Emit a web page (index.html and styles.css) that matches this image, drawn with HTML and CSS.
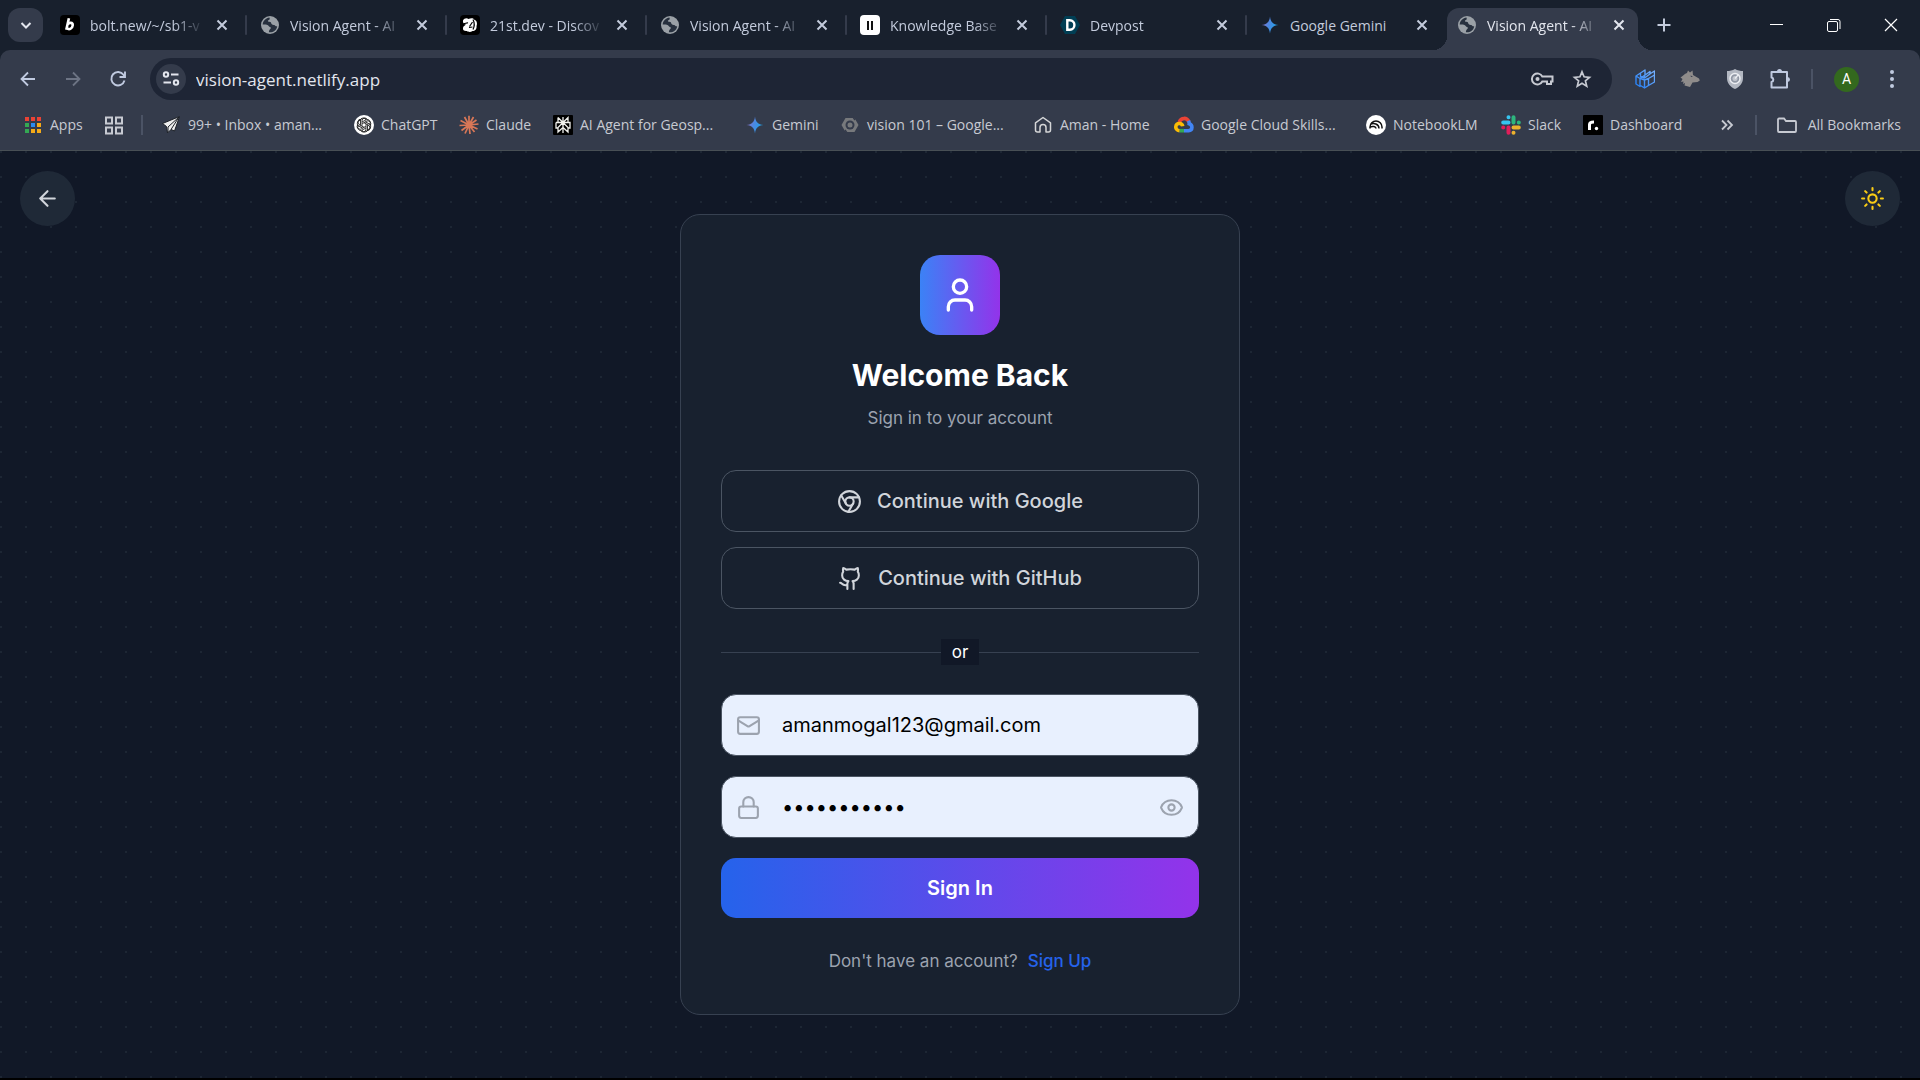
FILE: index.html
```
<!DOCTYPE html>
<html lang="en">
<head>
<meta charset="utf-8">
<meta name="viewport" content="width=device-width, initial-scale=1">
<title>Vision Agent - AI</title>
<link rel="stylesheet" href="styles.css">
</head>
<body>
<svg class="sprite" aria-hidden="true">
  <defs>
    <linearGradient id="spark-fill" x1="0" y1="0" x2="1" y2="0.3">
      <stop offset="0" stop-color="#a06fc0"/><stop offset="0.5" stop-color="#4f86e0"/><stop offset="1" stop-color="#1fa3e8"/>
    </linearGradient>
    <linearGradient id="cube-fill" x1="0" y1="1" x2="1" y2="0">
      <stop offset="0" stop-color="#1f7cf5"/><stop offset="1" stop-color="#7ab4ff"/>
    </linearGradient>
  </defs>
  <symbol id="globe" viewBox="0 0 20 20">
    <circle cx="10" cy="10" r="9" fill="#9aa0a6"/>
    <path d="M9.5 2.6C6 3 3 5.800 2.700 9.600c1.600-.2 3.400-.1 4.800.4 1.200.5 1.200 1.700 2.300 1.900 1.300.2 1.300 1 .7 1.900-.6.9-1.700 1.300-1.600 3.500 4 .5 7.600-2 8.300-5.800-.8 0-1.700-.2-2.200-.9-.7-.9-2-.6-2.900-1.100-1.300-.8-.6-2.300-1.900-2.500-1 -.1-2.200.1-2.300-.9-.1-.9 1.200-.9 1.700-1.500.4-.6-.1-1.300-.1-2z" fill="#27303e"/>
  </symbol>
  <symbol id="close" viewBox="0 0 20 20"><path d="M5.500 5.500l9 9M14.500 5.500l-9 9" stroke="currentColor" stroke-width="2" fill="none"/></symbol>
  <symbol id="spark" viewBox="0 0 20 20"><path d="M10 1.500C10.600 7 13 9.400 18.500 10 13 10.600 10.600 13 10 18.500 9.400 13 7 10.600 1.500 10 7 9.400 9.400 7 10 1.500z" fill="url(#spark-fill)"/></symbol>
</svg>

<header class="browser">
  <div class="tabstrip">
    <button class="tab-search" aria-label="Search tabs"><svg width="20" height="20" viewBox="0 0 20 20"><path d="M5.500 8l4.500 4.500L14.500 8" fill="none" stroke="currentColor" stroke-width="2"/></svg></button>
    <div class="tab">
      <svg class="ico" viewBox="0 0 20 20"><rect width="20" height="20" rx="4" fill="#000"/><path d="M8.900 3.200L6.300 14.800M7.700 9.300C9 7.300 13 7.200 12.700 10.300 12.400 13.800 8.800 15.300 7 13" fill="none" stroke="#fff" stroke-width="2.600"/></svg>
      <span class="tab-label">bolt.new/~/sb1-v</span>
      <button class="tab-close" aria-label="Close tab"><svg class="ico"><use href="#close"/></svg></button><span class="tab-sep"></span>
    </div>
    <div class="tab">
      <svg class="ico"><use href="#globe"/></svg>
      <span class="tab-label">Vision Agent - AI</span>
      <button class="tab-close" aria-label="Close tab"><svg class="ico"><use href="#close"/></svg></button><span class="tab-sep"></span>
    </div>
    <div class="tab">
      <svg class="ico" viewBox="0 0 20 20"><rect width="20" height="20" rx="4" fill="#000"/><path d="M3 5.500C4 3 7 2.500 8.500 4 11 2.500 14 3 14.500 5 17 5.500 17.500 9 16.500 11c.5 3-1.500 5-4 5-2 1.500-4.500 1-5.500 0-2.500.5-4.500-1-4-3 0-2 2-2.500 3-3.500-2 0-3.500-2-3-4z" fill="#fff"/><path d="M3.500 8.500c1.500.5 3-1 4.500-.5M9 12.500l3.500-.5M12.500 7L9.500 11.500M13 4.500c1.500 3 1.500 7 0 10" fill="none" stroke="#000" stroke-width="1.200"/></svg>
      <span class="tab-label">21st.dev - Discov</span>
      <button class="tab-close" aria-label="Close tab"><svg class="ico"><use href="#close"/></svg></button><span class="tab-sep"></span>
    </div>
    <div class="tab">
      <svg class="ico"><use href="#globe"/></svg>
      <span class="tab-label">Vision Agent - AI</span>
      <button class="tab-close" aria-label="Close tab"><svg class="ico"><use href="#close"/></svg></button><span class="tab-sep"></span>
    </div>
    <div class="tab">
      <svg class="ico" viewBox="0 0 20 20"><rect width="20" height="20" rx="4" fill="#fff"/><path d="M7 6h2v9H7zM11 6h2v9h-2z" fill="#111"/></svg>
      <span class="tab-label">Knowledge Base</span>
      <button class="tab-close" aria-label="Close tab"><svg class="ico"><use href="#close"/></svg></button><span class="tab-sep"></span>
    </div>
    <div class="tab">
      <svg class="ico" viewBox="0 0 20 20"><path d="M5 1h10l5 9-5 9H5l-5-9z" fill="#003e54"/><path d="M7.300 5.300h2.400c6.300 0 6.300 9.400 0 9.400H7.300z" fill="none" stroke="#fff" stroke-width="2.400"/></svg>
      <span class="tab-label">Devpost</span>
      <button class="tab-close" aria-label="Close tab"><svg class="ico"><use href="#close"/></svg></button><span class="tab-sep"></span>
    </div>
    <div class="tab">
      <svg class="ico"><use href="#spark"/></svg>
      <span class="tab-label tab-label-full">Google Gemini</span>
      <button class="tab-close" aria-label="Close tab"><svg class="ico"><use href="#close"/></svg></button>
    </div>
    <div class="tab tab-active">
      <svg class="ico"><use href="#globe"/></svg>
      <span class="tab-label">Vision Agent - AI</span>
      <button class="tab-close" aria-label="Close tab"><svg class="ico"><use href="#close"/></svg></button>
    </div>
    <button class="new-tab" aria-label="New tab"><svg class="ico" viewBox="0 0 20 20"><path d="M10 3.500v13M3.500 10h13" stroke="currentColor" stroke-width="2"/></svg></button>
    <div class="window-controls">
      <button aria-label="Minimize"><svg class="ico" viewBox="0 0 20 20"><path d="M3 9.500h13" stroke="currentColor"/></svg></button>
      <button aria-label="Restore"><svg class="ico" viewBox="0 0 20 20"><rect x="3.500" y="6.500" width="10" height="10" rx="1.500" fill="none" stroke="currentColor"/><path d="M6 4.500h8a2 2 0 0 1 2 2V14" fill="none" stroke="currentColor"/></svg></button>
      <button aria-label="Close"><svg class="ico" viewBox="0 0 20 20"><path d="M4 4l12 12M16 4L4 16" stroke="currentColor" stroke-width="1.200"/></svg></button>
    </div>
  </div>

  <div class="toolbar">
    <div class="nav-row">
      <button class="tool" aria-label="Back"><svg class="ico" viewBox="0 0 20 20"><path d="M17 10H4M10 3.500L3.500 10l6.500 6.500" fill="none" stroke="currentColor" stroke-width="1.800"/></svg></button>
      <button class="tool tool-off" aria-label="Forward"><svg class="ico" viewBox="0 0 20 20"><path d="M3 10h13M10 3.500l6.500 6.500-6.500 6.500" fill="none" stroke="currentColor" stroke-width="1.800"/></svg></button>
      <button class="tool" aria-label="Reload"><svg class="ico" viewBox="0 0 20 20"><path d="M16.500 11.500A6.700 6.700 0 1 1 15.500 5.800L17 7.500M17 2.500V8h-5.500" fill="none" stroke="currentColor" stroke-width="1.900"/></svg></button>
      <div class="omnibox">
        <button class="site-info" aria-label="Site information"><svg class="ico" viewBox="0 0 20 20"><g fill="none" stroke="currentColor" stroke-width="2"><circle cx="5" cy="5.500" r="2.200"/><path d="M10 5.500h7.500M2.500 13.500H10"/><circle cx="15" cy="13.500" r="2.200"/></g></svg></button>
        <input class="address" type="text" aria-label="Address" value="vision-agent.netlify.app">
        <button class="omni-action" aria-label="Passwords"><svg width="24" height="20" viewBox="0 0 24 20"><g fill="none" stroke="currentColor" stroke-width="2"><path d="M12.300 7.500a5.500 5.500 0 1 0 0 5H17V15h4v-2.500h1.500v-5z"/></g><circle cx="7.500" cy="10" r="2" fill="currentColor"/></svg></button>
        <button class="omni-action" aria-label="Bookmark this page"><svg class="ico" viewBox="0 0 20 20"><path d="M10 2.800l2.100 5 5.400.5-4.100 3.500 1.300 5.300-4.700-2.900-4.700 2.900 1.300-5.300-4.100-3.500 5.400-.5z" fill="none" stroke="currentColor" stroke-width="1.700"/></svg></button>
      </div>
      <div class="extensions">
        <button class="tool" aria-label="Cube extension"><svg class="ico" viewBox="0 0 20 20"><g fill="none" stroke="url(#cube-fill)" stroke-width="1.400" stroke-linejoin="round"><path d="M1 7l4 2.500v8L1 15zM5.500 9.500l4 1.500v8l-4-2.500M9.500 11l4-1.500v7l-4 2.500M1 7l9-6v5M5 9.500L10 6M5.500 4.500v3l4 1.500L15 5V2.500L9.500 6.500v3M13.500 9.500L19.500 6V2L14 5.500M19.500 6v7l-6 3.500"/></g></svg></button>
        <button class="tool" aria-label="Wolf extension"><svg class="ico" viewBox="0 0 20 20"><path d="M.5 8.500C3 7 4.500 4.500 7 4l1-2.500 2 2 2.500-2L13 6l6 3.500.8 2-2.300 1.500-5 .5-2.500 4.500-5.500-1.500.5-2.500-2 1 .5-2.500-2.500.5 1.500-3z" fill="#8f8c8b"/><path d="M10.500 6.500l2.500 1-2 .5z" fill="#343b4b"/></svg></button>
        <button class="tool" aria-label="Shield extension"><svg class="ico" viewBox="0 0 20 20"><path d="M10 0c2.500 1.500 5.500 2 8 2v7c0 5.500-3.500 9-8 11-4.500-2-8-5.500-8-11V2c2.500 0 5.500-.5 8-2z" fill="#b3b8c2"/><circle cx="10" cy="9.500" r="5" fill="#9097a4" stroke="#eceef2" stroke-width="1.500"/><circle cx="10" cy="9.500" r="2.500" fill="#c3c7cf"/><path d="M10 9.500l3.500-4" fill="none" stroke="#eceef2" stroke-width="1.300"/></svg></button>
        <button class="tool" aria-label="Extensions"><svg width="22" height="22" viewBox="0 0 22 22"><path d="M2.500 4H18v15.500H2.500V14a2.300 2.300 0 0 0 0-4.500z" fill="none" stroke="currentColor" stroke-width="2" stroke-linejoin="round"/><path d="M8 3.500a2.500 2.500 0 0 1 5 0zM18.500 9a2.500 2.500 0 0 1 0 5z" fill="currentColor"/></svg></button>
      </div>
      <span class="tool-sep"></span>
      <button class="tool" aria-label="Profile"><span class="avatar">A</span></button>
      <button class="tool" aria-label="Menu"><svg class="ico" viewBox="0 0 20 20"><g fill="currentColor"><circle cx="10" cy="3" r="2"/><circle cx="10" cy="10" r="2"/><circle cx="10" cy="17" r="2"/></g></svg></button>
    </div>

    <nav class="bookmarks" aria-label="Bookmarks">
      <div class="bookmark-list">
        <a class="bookmark" href="#"><svg class="ico" viewBox="0 0 20 20"><path d="M2 2h4v4H2zM8 2h4v4H8zM14 2h4v4h-4z" fill="#ea4335"/><path d="M2 8h4v4H2zM2 14h4v4H2z" fill="#34a853"/><path d="M8 8h4v4H8z" fill="#2a8bf2"/><path d="M14 8h4v4h-4zM8 14h4v4H8zM14 14h4v4h-4z" fill="#f5ab18"/></svg><span>Apps</span></a>
        <a class="bookmark" href="#" aria-label="Tab groups"><svg class="ico" viewBox="0 0 20 20"><path d="M2 2.500h6v6H2zM12 2.500h6v6h-6zM2 12.500h6v6H2zM12 12.500h6v6h-6z" fill="none" stroke="currentColor" stroke-width="2"/></svg></a>
        <span class="bar-sep"></span>
        <a class="bookmark" href="#"><svg class="ico" viewBox="0 0 20 20"><path d="M18.500 1.500L1.500 8.500l4 3 1 6.500 3.500-3.500 3.500 1.500z" fill="#eee" stroke="#1b1f26"/><path d="M18 2L7 12v5M18 2l-8 12.500" fill="none" stroke="#1b1f26"/></svg><span>99+ • Inbox • aman...</span></a>
        <a class="bookmark" href="#"><svg class="ico" viewBox="0 0 20 20"><circle cx="10" cy="10" r="10" fill="#fff"/><g fill="none" stroke="#222" stroke-width="0.900"><path id="knot" d="M8 10.800V5.800a2.900 2.900 0 0 1 5.400-1.300M8 7l4.300-2.300a2.900 2.900 0 0 1 3.300 4.500"/><use href="#knot" transform="rotate(60 10 10)"/><use href="#knot" transform="rotate(120 10 10)"/><use href="#knot" transform="rotate(180 10 10)"/><use href="#knot" transform="rotate(240 10 10)"/><use href="#knot" transform="rotate(300 10 10)"/></g></svg><span>ChatGPT</span></a>
        <a class="bookmark" href="#"><svg class="ico" viewBox="0 0 20 20"><path d="M10 10V.800M10 10l4.500-8M10 10l7.500-5M10 10l9.500-1M10 10l8.500 4M10 10l5.500 7M10 10l1 9M10 10l-4 8.500M10 10l-7.500 5.500M10 10l-9.500.500M10 10L1.500 5.500M10 10L5.500 2" stroke="#d97757" stroke-width="1.700"/></svg><span>Claude</span></a>
        <a class="bookmark" href="#"><svg class="ico" viewBox="0 0 20 20"><rect width="20" height="20" rx="1" fill="#000"/><path d="M10 2v16M5 2.500l5 5 5-5v5M5 2.500v5h10M3 7.500h2M15 7.500h2V13h-2M3 7.500V13h2M10 7.500L5 12.500V17l5-4.500M10 7.500l5 5V17l-5-4.500" fill="none" stroke="#f2f2ee" stroke-width="1.300"/></svg><span>AI Agent for Geosp...</span></a>
        <a class="bookmark" href="#"><svg class="ico"><use href="#spark"/></svg><span>Gemini</span></a>
        <a class="bookmark" href="#"><svg class="ico" viewBox="0 0 20 20"><path d="M5.500 3h9l4 7-4 7h-9l-4-7z" fill="#77797c"/><circle cx="10" cy="10" r="4.500" fill="#343b4b"/><circle cx="10" cy="10" r="2.500" fill="#77797c"/><path d="M13 2l2 3M5 15l2 3" stroke="#343b4b" stroke-width="1.500"/></svg><span>vision 101 – Google...</span></a>
        <a class="bookmark" href="#"><svg class="ico" viewBox="0 0 20 20"><path d="M2.500 7.800L10 2.500l7.500 5.300V15a2 2 0 0 1-2 2H13v-4.500a3 3 0 0 0-6 0V17H4.500a2 2 0 0 1-2-2z" fill="none" stroke="#d5d6d8" stroke-width="1.500" stroke-linejoin="round"/></svg><span>Aman - Home</span></a>
        <a class="bookmark" href="#"><svg class="ico" viewBox="0 0 20 20"><g fill="none" stroke-width="3.600"><path d="M5.200 7.200C7 2.200 13 2.200 15 7" stroke="#ea4335"/><path d="M14.500 5.800c.5 1 .8 2 .7 3 3.500 1 4 6.500-.7 6.900H10" stroke="#4285f4"/><path d="M10 15.700H5.500" stroke="#34a853"/><path d="M5.500 15.700c-5.500-.5-4.500-8 .5-7.200 1.500.3 2.500 1.500 2.700 2.700" stroke="#fbbc05"/></g></svg><span>Google Cloud Skills...</span></a>
        <a class="bookmark" href="#"><svg class="ico" viewBox="0 0 20 20"><circle cx="10" cy="10" r="10" fill="#fff"/><path d="M4 13.500V12a6 6 0 0 1 12 0v1.500M4.500 9.500c3-2 8.500-.5 8.500 4M4 12c2.500-1.200 6-.5 6 1.500" fill="none" stroke="#111" stroke-width="1.500"/></svg><span>NotebookLM</span></a>
        <a class="bookmark" href="#"><svg class="ico" viewBox="0 0 20 20"><g stroke-width="4" stroke-linecap="round"><path d="M7.500 2.200h.01M2.200 7.500h5.300" stroke="#36c5f0"/><path d="M12.500 2.200v5.300M17.800 7.500h.01" stroke="#2eb67d"/><path d="M12.500 17.800h.01M12.500 12.500h5.300" stroke="#ecb22e"/><path d="M7.500 12.500v5.300M2.200 12.500h.01" stroke="#e01e5a"/></g></svg><span>Slack</span></a>
        <a class="bookmark" href="#"><svg class="ico" viewBox="0 0 20 20"><rect width="20" height="20" rx="1" fill="#000"/><path d="M6.500 15V9.500Q6.500 7 11 7" fill="none" stroke="#fff" stroke-width="3"/><circle cx="13.500" cy="13.500" r="1.700" fill="#fff"/></svg><span>Dashboard</span></a>
      </div>
      <div class="bookmark-end">
        <button class="more" aria-label="More bookmarks"><svg class="ico" viewBox="0 0 20 20"><path d="M5 5.500l4.500 4.500L5 14.500M10.500 5.500L15 10l-4.500 4.500" fill="none" stroke="currentColor" stroke-width="1.800"/></svg></button>
        <span class="bar-sep"></span>
        <a class="bookmark all-bookmarks" href="#"><svg class="ico" viewBox="0 0 20 20"><path d="M1 4.500a1 1 0 0 1 1-1h5l2 2.500h9a1 1 0 0 1 1 1V16a1 1 0 0 1-1 1H2a1 1 0 0 1-1-1z" fill="none" stroke="currentColor" stroke-width="1.800"/></svg><span>All Bookmarks</span></a>
      </div>
    </nav>
  </div>
</header>

<main class="page">
  <button class="round-button" aria-label="Go back"><svg class="line-icon" viewBox="0 0 24 24"><path d="m12 19-7-7 7-7M19 12H5"/></svg></button>

  <section class="card">
    <div class="card-logo"><svg class="line-icon" viewBox="0 0 24 24"><path d="M19 21v-2a4 4 0 0 0-4-4H9a4 4 0 0 0-4 4v2"/><circle cx="12" cy="7" r="4"/></svg></div>
    <h1 class="card-title">Welcome Back</h1>
    <p class="card-subtitle">Sign in to your account</p>

    <div class="providers">
      <button class="provider"><svg class="line-icon" viewBox="0 0 24 24"><circle cx="12" cy="12" r="10"/><circle cx="12" cy="12" r="4"/><path d="M21.170 8H12M3.950 6.060 8.540 14M10.880 21.940 15.460 14"/></svg>Continue with Google</button>
      <button class="provider"><svg class="line-icon" viewBox="0 0 24 24"><path d="M15 22v-4a4.800 4.800 0 0 0-1-3.500c3 0 6-2 6-5.500.08-1.250-.27-2.480-1-3.500.28-1.150.28-2.350 0-3.500 0 0-1 0-3 1.500-2.640-.5-5.360-.5-8 0C6 2 5 2 5 2c-.3 1.150-.3 2.350 0 3.500A5.403 5.403 0 0 0 4 9c0 3.500 3 5.500 6 5.500-.39.490-.68 1.050-.85 1.650-.17.600-.22 1.230-.15 1.850v4M9 18c-4.510 2-5-2-7-2"/></svg>Continue with GitHub</button>
    </div>

    <div class="divider"><span>or</span></div>

    <form class="form">
      <label class="field">
        <svg class="line-icon" viewBox="0 0 24 24"><rect width="20" height="16" x="2" y="4" rx="2"/><path d="m22 7-8.970 5.700a1.940 1.940 0 0 1-2.060 0L2 7"/></svg>
        <input type="email" aria-label="Email" value="amanmogal123@gmail.com">
      </label>
      <div class="field">
        <svg class="line-icon" viewBox="0 0 24 24"><rect width="18" height="11" x="3" y="11" rx="2"/><path d="M7 11V7a5 5 0 0 1 10 0v4"/></svg>
        <input type="password" aria-label="Password" value="password123">
        <button class="reveal" type="button" aria-label="Show password"><svg class="line-icon" viewBox="0 0 24 24"><path d="M2.062 12.348a1 1 0 0 1 0-.696 10.750 10.750 0 0 1 19.876 0 1 1 0 0 1 0 .696 10.750 10.750 0 0 1-19.876 0"/><circle cx="12" cy="12" r="3"/></svg></button>
      </div>
      <button class="submit" type="button">Sign In</button>
    </form>

    <p class="signup">Don't have an account? <a href="#">Sign Up</a></p>
  </section>

  <button class="round-button round-button-end" aria-label="Toggle theme"><svg class="line-icon" viewBox="0 0 24 24"><circle cx="12" cy="12" r="4"/><path d="M12 2v2M12 20v2M4.930 4.930l1.410 1.410M17.660 17.660l1.410 1.410M2 12h2M20 12h2M6.340 17.660l-1.410 1.410M19.070 4.930l-1.410 1.410"/></svg></button>
</main>
</body>
</html>
```
FILE: styles.css
```
* { box-sizing: border-box; }

body {
  margin: 0;
  min-height: 100vh;
  display: flex;
  flex-direction: column;
  background: #111827;
  border-bottom: 2px solid #000;
  color: #fff;
  font-family: Inter, "Liberation Sans", sans-serif;
}

button, input { font: inherit; color: inherit; border: 0; background: none; padding: 0; margin: 0; }
a { color: inherit; text-decoration: none; }
h1, p { margin: 0; }

.sprite { position: absolute; width: 0; height: 0; }
.ico { width: 20px; height: 20px; flex: none; display: block; }

/* Browser frame */
.browser {
  background: #18202d;
  font-family: "Open Sans", "Noto Sans", sans-serif;
  font-size: 14px;
}

.tabstrip { display: flex; height: 50px; padding: 8px 1px 0 8px; }

.tab-search {
  width: 35px;
  height: 34px;
  margin-right: 4px;
  border-radius: 12px;
  background: #343b4b;
  color: #e3e6ee;
  display: grid;
  place-items: center;
}

.tab {
  display: flex;
  align-items: center;
  gap: 10px;
  width: 200px;
  height: 42px;
  padding: 0 0 8px 13px;
  color: #c3cbdc;
}

.tab-label {
  width: 112px;
  white-space: nowrap;
  mask-image: linear-gradient(to right, #000 84px, transparent 114px);
}
.tab-label-full { mask-image: none; }

.tab-close { width: 20px; height: 20px; }
.tab-sep { width: 2px; height: 20px; margin-left: auto; border-radius: 1px; background: #343b4b; }

.tab-active {
  position: relative;
  width: 191px;
  padding-left: 10px;
  border-radius: 12px 12px 0 0;
  background: #343b4b;
  color: #e3e6ee;
}

.tab-active::before,
.tab-active::after {
  content: "";
  position: absolute;
  bottom: 0;
  width: 14px;
  height: 14px;
}
.tab-active::before { right: 100%; background: radial-gradient(circle at 0 0, transparent 14px, #343b4b 14px); }
.tab-active::after { left: 100%; background: radial-gradient(circle at 100% 0, transparent 14px, #343b4b 14px); }

.new-tab {
  width: 34px;
  height: 34px;
  margin-left: 9px;
  color: #c3cbdc;
  display: grid;
  place-items: center;
}

.window-controls { display: flex; margin-left: auto; height: 34px; }
.window-controls button { width: 57px; display: grid; place-items: center; }

.toolbar {
  background: #343b4b;
  border-radius: 10px 10px 0 0;
  border-bottom: 1px solid #484f55;
}

.nav-row { display: flex; align-items: center; padding: 8px 6px 0 5px; }
.tool { width: 45px; height: 42px; color: #c0cae0; display: grid; place-items: center; }
.tool-off { color: #6d7484; }

.omnibox {
  flex: 1;
  display: flex;
  align-items: center;
  height: 42px;
  margin: 0 10px;
  padding: 0 10px 0 6px;
  border-radius: 21px;
  background: #1e2535;
}

.site-info {
  width: 30px;
  height: 30px;
  margin-right: 10px;
  border-radius: 50%;
  background: #343b4b;
  color: #e3e6ee;
  display: grid;
  place-items: center;
}

.address { flex: 1; min-width: 0; outline: 0; font-size: 17px; color: #e3e6ee; }
.omni-action { width: 40px; height: 40px; color: #c7cad2; display: grid; place-items: center; }
.extensions { display: flex; }
.tool-sep { width: 2px; height: 20px; margin: 0 11px 0 9px; background: #4b5365; }

.avatar {
  width: 25px;
  height: 25px;
  border-radius: 50%;
  background: #33691e;
  color: #fff;
  font: 14px/25px Roboto, sans-serif;
  text-align: center;
}

.bookmarks { display: flex; align-items: center; height: 50px; padding: 0 19px 0 23px; color: #c7cad2; }

.bookmark-list {
  display: grid;
  align-items: center;
  grid-template-columns: 81px 37px 20px 193px 105px 94px 192px 95px 193px 141px 192px 135px 82px auto;
}

.bookmark { display: flex; align-items: center; gap: 7px; white-space: nowrap; }
.bookmark span { padding-bottom: 2px; }
.bar-sep { width: 2px; height: 20px; background: #4b5365; }
.bookmark-end { display: flex; align-items: center; margin-left: auto; }
.more { width: 20px; height: 20px; margin-right: 18px; }
.all-bookmarks { gap: 11px; margin-left: 20px; }

/* Sign-in page */
.page {
  flex: 1;
  display: grid;
  grid-template-columns: 1fr minmax(0, 560px) 1fr;
  align-items: center;
  padding: 20px;
  background: radial-gradient(circle at 1px 1px, #1d2634 1px, transparent 0) 0 0 / 25px 25px;
}

.line-icon {
  width: 25px;
  height: 25px;
  flex: none;
  fill: none;
  stroke: currentColor;
  stroke-width: 2;
  stroke-linecap: round;
  stroke-linejoin: round;
}

.round-button {
  align-self: start;
  width: 55px;
  height: 55px;
  border-radius: 50%;
  background: #1f2937;
  color: #d1d5db;
  display: grid;
  place-items: center;
}
.round-button-end { justify-self: end; color: #facc15; }

.card {
  display: flex;
  flex-direction: column;
  padding: 40px;
  border: 1px solid #374151;
  border-radius: 20px;
  background: #18212f;
}

.card-logo {
  align-self: center;
  width: 80px;
  height: 80px;
  border-radius: 20px;
  background: linear-gradient(to right, #3b82f6, #9333ea);
  display: grid;
  place-items: center;
}
.card-logo .line-icon { width: 40px; height: 40px; }

.card-title { margin-top: 20px; font-size: 30px; line-height: 40px; font-weight: 700; text-align: center; }
.card-subtitle { margin-top: 10px; font-size: 17px; line-height: 26px; color: #9ca3af; text-align: center; }

.providers { display: grid; gap: 15px; margin-top: 39px; }

.provider {
  display: flex;
  align-items: center;
  justify-content: center;
  gap: 15px;
  height: 62px;
  border: 1px solid #4b5563;
  border-radius: 15px;
  color: #d1d5db;
  font-size: 20px;
  font-weight: 500;
}

.divider {
  display: flex;
  align-items: center;
  margin: 30px 0 29px;
  font-size: 17px;
  line-height: 26px;
}
.divider::before, .divider::after { content: ""; flex: 1; height: 1px; background: #374151; }
.divider span { padding: 0 11px; background: #111827; }

.form { display: grid; gap: 20px; }

.field {
  display: flex;
  align-items: center;
  gap: 21px;
  height: 62px;
  padding: 0 14px;
  border: 1px solid #4b5563;
  border-radius: 15px;
  background: #e8f0fe;
  color: #9ca3af;
}
.field input { flex: 1; min-width: 0; outline: 0; font-size: 20px; color: #000; }
.reveal { height: 25px; }

.submit {
  height: 60px;
  border-radius: 15px;
  background: linear-gradient(to right, #2563eb, #9333ea);
  font-size: 20px;
  font-weight: 600;
}

.signup {
  display: flex;
  justify-content: center;
  gap: 10px;
  margin-top: 30px;
  font-size: 17px;
  line-height: 26px;
  color: #9ca3af;
}
.signup a { color: #2563eb; font-weight: 500; }
```
